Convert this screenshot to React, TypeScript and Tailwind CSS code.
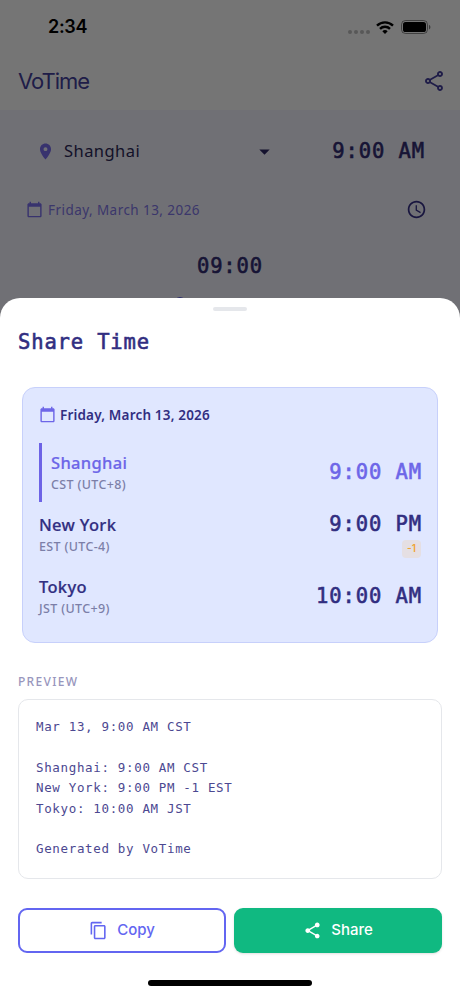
import {
  MdAccessTime,
  MdArrowDropDown,
  MdCalendarToday,
  MdContentCopy,
  MdLocationOn,
  MdOutlineShare,
  MdShare,
} from "react-icons/md";

type Zone = {
  city: string;
  offset: string;
  time: string;
  dayShift?: string;
};

const home: Zone = { city: "Shanghai", offset: "CST (UTC+8)", time: "9:00 AM" };

const zones: Zone[] = [
  { city: "New York", offset: "EST (UTC-4)", time: "9:00 PM", dayShift: "-1" },
  { city: "Tokyo", offset: "JST (UTC+9)", time: "10:00 AM" },
];

const preview = `Mar 13, 9:00 AM CST

Shanghai: 9:00 AM CST
New York: 9:00 PM -1 EST
Tokyo: 10:00 AM JST

Generated by VoTime`;

function StatusBar() {
  return (
    <div className="flex h-[54px] items-center justify-between pl-12 pr-[29px]">
      <span className="font-['Inter',sans-serif] text-[18px] font-semibold leading-none tracking-[-0.3px] text-black">
        2:34
      </span>
      <div className="flex items-center">
        <div className="mr-[6px] mt-[9px] flex gap-[2px]">
          {[0, 1, 2, 3].map((dot) => (
            <span key={dot} className="size-[4px] rounded-full bg-black/25" />
          ))}
        </div>
        <svg width="18" height="13" viewBox="0 0 18 13" fill="none" stroke="#000" strokeWidth="2.4">
          <path d="M1 4.6a11.5 11.5 0 0 1 16 0" />
          <path d="M4 7.8a7.2 7.2 0 0 1 10 0" />
          <path d="M9 13 6.3 10.2a3.9 3.9 0 0 1 5.4 0z" fill="#000" stroke="none" />
        </svg>
        <svg className="ml-[7px]" width="30" height="14" viewBox="0 0 30 14">
          <rect x=".5" y=".5" width="26" height="13" rx="4" fill="none" stroke="#000" strokeOpacity=".45" />
          <rect x="2" y="2" width="23" height="10" rx="2.6" fill="#000" />
          <path d="M28 5v4.4c.9-.4 1.4-1.2 1.4-2.2S28.9 5.4 28 5z" fillOpacity=".5" />
        </svg>
      </div>
    </div>
  );
}

function ClockPage() {
  return (
    <div className="h-full bg-[#f5f4ff]">
      <div className="h-[110px] bg-white">
        <StatusBar />
        <div className="flex h-[54px] items-center justify-between pl-[18px] pr-[14px] text-[#453f9e]">
          <h1 className="font-['Inter',sans-serif] text-[22px] leading-none tracking-[-1px]">
            VoTime
          </h1>
          <MdOutlineShare size={24} />
        </div>
      </div>
      <div className="flex h-[82px] items-center pl-9 pr-[35px]">
        <MdLocationOn size={19} className="text-[#7a6ff0]" />
        <span className="ml-[9px] font-['Noto_Sans',sans-serif] text-[16.5px] tracking-[0.45px] text-[#2c2958]">
          Shanghai
        </span>
        <MdArrowDropDown size={25} className="ml-auto text-[#2c2865]" />
        <span className="ml-[54px] w-[94px] whitespace-nowrap text-right font-['DejaVu_Sans_Mono',monospace] text-[20.5px] tracking-[0.9px] text-[#322d74] [-webkit-text-stroke:0.6px]">
          9:00 AM
        </span>
      </div>
      <div className="flex h-9 items-center pl-[26px] pr-[33px]">
        <MdCalendarToday size={17} className="-mt-px text-[#7a6ff0]" />
        <span className="ml-[5px] font-['Noto_Sans',sans-serif] text-[13.5px] tracking-[0.44px] text-[#8278ea]">
          Friday, March 13, 2026
        </span>
        <MdAccessTime size={21} className="-mt-px ml-auto text-[#37318a]" />
      </div>
      <div className="mt-[23px] text-center font-['DejaVu_Sans_Mono',monospace] text-[20.5px] leading-[30px] tracking-[0.9px] text-[#322d74] [-webkit-text-stroke:0.6px]">
        09:00
      </div>
      {/* slider thumb, only its top edge shows above the sheet */}
      <div className="ml-[174px] mt-[16px] size-3 rounded-full bg-[#6366f1]" />
    </div>
  );
}

function ZoneTime({ time }: { time: string }) {
  return (
    <span className="-mr-px font-['DejaVu_Sans_Mono',monospace] text-[20.5px] leading-[26px] tracking-[0.9px] [-webkit-text-stroke:0.6px]">
      {time}
    </span>
  );
}

function ZoneName({ zone }: { zone: Zone }) {
  return (
    <div className="font-['Noto_Sans',sans-serif]">
      <div className="text-[16.5px] font-medium leading-6 tracking-[0.32px] [-webkit-text-stroke:0.2px]">
        {zone.city}
      </div>
      <div className="text-[12.5px] font-medium leading-[19px] tracking-[0.35px] text-[#7c7fa8]">
        {zone.offset}
      </div>
    </div>
  );
}

function ShareCard() {
  return (
    <div className="mx-1 h-[256px] rounded-[13px] border border-[#c7d0fb] bg-[#e0e7ff] px-4 pt-[16px] text-[#312e81]">
      <div className="flex h-[22px] items-center">
        <MdCalendarToday size={17} className="-mt-[2px] text-[#6d66e8]" />
        <span className="ml-[4px] font-['Noto_Sans',sans-serif] text-[13.5px] font-semibold tracking-[0.18px]">
          Friday, March 13, 2026
        </span>
      </div>
      <div className="mt-[17px] flex h-[59px] items-center justify-between border-l-[3px] border-[#6d63e6] pl-[9px] text-[#6d66e8]">
        <ZoneName zone={home} />
        <div className="-mt-[2px] flex">
          <ZoneTime time={home.time} />
        </div>
      </div>
      {zones.map((zone) => (
        <div key={zone.city} className="flex h-[62px] items-center justify-between pt-[2px]">
          <ZoneName zone={zone} />
          <div className="flex flex-col items-end">
            <ZoneTime time={zone.time} />
            {zone.dayShift && (
              <span className="mt-[3px] flex h-[18px] w-[19px] items-center justify-center rounded-[4px] bg-[#e5dfe3] font-['Inter',sans-serif] text-[10px] font-semibold text-[#f0a535]">
                {zone.dayShift}
              </span>
            )}
          </div>
        </div>
      ))}
    </div>
  );
}

function ShareSheet() {
  return (
    <div className="absolute inset-x-0 bottom-0 flex h-[697px] flex-col rounded-t-[20px] bg-white px-[18px]">
      <div className="mx-auto mt-[9px] h-[4px] w-[34px] shrink-0 rounded-full bg-[#e5e7eb]" />
      <h2 className="mt-[16px] font-['DejaVu_Sans_Mono',monospace] text-[20.5px] leading-[30px] tracking-[0.85px] text-[#312e81] [-webkit-text-stroke:0.6px]">
        Share Time
      </h2>
      <div className="mt-[30px]">
        <ShareCard />
      </div>
      <div className="mt-[30px] font-['Noto_Sans',sans-serif] text-[12px] font-medium leading-[18px] tracking-[1.3px] text-[#9896bd]">
        PREVIEW
      </div>
      <pre className="mt-[8px] h-[180px] rounded-[10px] border border-[#e5e7eb] px-[17px] pt-[17px] font-['DejaVu_Sans_Mono',monospace] text-[12.5px] leading-[20.4px] tracking-[0.66px] text-[#4c4891]">
        {preview}
      </pre>
      <div className="mt-[29px] grid grid-cols-2 gap-[8px] font-['Inter',sans-serif] text-[15px] font-medium">
        <button className="flex h-[45px] items-center justify-center gap-[9px] rounded-[9px] border-2 border-[#6366f1] text-[#6366f1]">
          <MdContentCopy size={19} />
          Copy
        </button>
        <button className="flex h-[45px] items-center justify-center gap-[9px] rounded-[9px] bg-[#10b981] text-white shadow-sm">
          <MdShare size={19} />
          Share
        </button>
      </div>
      <div className="mx-auto mt-auto mb-[9px] h-[6px] w-[164px] rounded-full bg-black" />
    </div>
  );
}

export default function App() {
  return (
    <div className="relative h-[995px] w-[460px] overflow-hidden">
      <ClockPage />
      <div className="absolute inset-0 bg-black/54" />
      <ShareSheet />
    </div>
  );
}
